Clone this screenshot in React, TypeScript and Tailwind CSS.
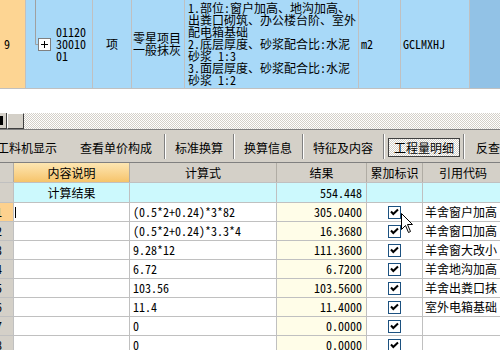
import React from "react";

const descLines = [
  "1.部位:窗户加高、地沟加高、",
  "出粪口砌筑、办公楼台阶、室外",
  "配电箱基础",
  "2.底层厚度、砂浆配合比:水泥",
  "砂浆 1:3",
  "3.面层厚度、砂浆配合比:水泥",
  "砂浆 1:2",
];

const rows = [
  { n: "1", f: "(0.5*2+0.24)*3*82", r: "305.0400", c: "羊舍窗户加高" },
  { n: "2", f: "(0.5*2+0.24)*3.3*4", r: "16.3680", c: "羊舍窗口加高" },
  { n: "3", f: "9.28*12", r: "111.3600", c: "羊舍窗大改小" },
  { n: "4", f: "6.72", r: "6.7200", c: "羊舍地沟加高" },
  { n: "5", f: "103.56", r: "103.5600", c: "羊舍出粪口抹" },
  { n: "6", f: "11.4", r: "11.4000", c: "室外电箱基础" },
  { n: "7", f: "0", r: "0.0000", c: "" },
  { n: "8", f: "0", r: "0.0000", c: "" },
];

const checker =
  "bg-[image:repeating-conic-gradient(#d4d0c8_0_25%,#ffffff_0_50%)] bg-[length:2px_2px]";

function Sep({ className = "" }: { className?: string }) {
  return (
    <div className={`flex h-[25px] shrink-0 ${className}`}>
      <div className="w-px bg-[#808080]" />
      <div className="w-px bg-white" />
    </div>
  );
}

function Check() {
  return (
    <svg width="13" height="13" viewBox="0 0 13 13" className="block">
      <rect x="0.5" y="0.5" width="12" height="12" fill="#ffffff" stroke="#1c5180" />
      <path d="M3 5.5 L5.3 8 L10 3.5" fill="none" stroke="#000000" strokeWidth="2" />
    </svg>
  );
}

export default function App() {
  return (
    <div className="relative w-[500px] h-[350px] overflow-hidden bg-white text-[12px] leading-[12px] text-black font-['Noto_Sans_Mono_CJK_SC','Noto_Sans_CJK_SC',sans-serif]">
      {/* selected bill row */}
      <div className="flex h-[89px] border-b border-[#c0c0c0] bg-[#a8d9f8]">
        <div className="w-[26px] shrink-0 bg-[#fdd593] border-r border-[#c0c0c0] flex items-center pl-[4px]">
          9
        </div>
        <div className="w-[67px] shrink-0 border-r border-[#c0c0c0] flex items-center">
          <svg width="30" height="88" viewBox="0 0 30 88" className="block shrink-0">
            <path d="M9.5 0 V44.5 H12" fill="none" stroke="#a0a0a0" />
            <rect x="12.5" y="38.5" width="12" height="12" fill="#ffffff" stroke="#808080" />
            <path d="M15 44.5 H22 M18.5 41 V48" fill="none" stroke="#000000" />
          </svg>
          <div>
            01120
            <br />
            30010
            <br />
            01
          </div>
        </div>
        <div className="w-[39px] shrink-0 border-r border-[#c0c0c0] flex items-center justify-center">
          项
        </div>
        <div className="w-[53px] shrink-0 border-r border-[#c0c0c0] flex items-center pl-[1px] whitespace-nowrap overflow-hidden">
          <div>
            零星项目
            <br />
            一般抹灰
          </div>
        </div>
        <div className="w-[174px] shrink-0 border-r border-[#c0c0c0] flex flex-col justify-center pl-[3px] whitespace-nowrap overflow-hidden">
          {descLines.map((l, i) => (
            <div key={i}>{l}</div>
          ))}
        </div>
        <div className="w-[42px] shrink-0 border-r border-[#c0c0c0] flex items-center pl-[2px]">
          m2
        </div>
        <div className="w-[69px] shrink-0 border-r border-[#c0c0c0] flex items-center pl-[2px]">
          GCLMXHJ
        </div>
        <div className="flex-1 bg-[#92c2e6]" />
      </div>

      <div className="h-[24px]" />

      {/* horizontal scrollbar */}
      <div className={`flex h-[17px] border-b border-[#808080] ${checker}`}>
        <div className="w-[7px] h-[16px] shrink-0 bg-[#d4d0c8] border-r border-b border-[#404040] flex items-center">
          <div className="w-[3px] h-[9px] bg-black" />
        </div>
        <div className="w-[17px] h-[16px] shrink-0 bg-[#d4d0c8] border border-white border-r-[#404040] border-b-[#404040]" />
      </div>

      {/* tabs */}
      <div className="flex items-center h-[33px] bg-[#d4d0c8] border-b border-[#808080] whitespace-nowrap overflow-hidden">
        <span className="-ml-[3px] shrink-0 pt-[3px]">工料机显示</span>
        <span className="ml-[23px] shrink-0 pt-[3px]">查看单价构成</span>
        <Sep className="ml-[12px]" />
        <span className="ml-[9px] shrink-0 pt-[3px]">标准换算</span>
        <Sep className="ml-[10px]" />
        <span className="ml-[9px] shrink-0 pt-[3px]">换算信息</span>
        <Sep className="ml-[10px]" />
        <span className="ml-[9px] shrink-0 pt-[3px]">特征及内容</span>
        <Sep className="ml-[10px]" />
        <div className={`ml-[3px] mt-[3px] h-[19px] w-[72px] shrink-0 flex items-center justify-center border border-[#404040] ${checker}`}>
          工程量明细
        </div>
        <Sep className="ml-[3px]" />
        <span className="ml-[11px] shrink-0 pt-[3px]">反查</span>
      </div>

      {/* grid header */}
      <div className="flex h-[20px] border-b border-[#c0c0c0] bg-[#d4d0c8]">
        <div className="w-[14px] shrink-0 border-r border-[#b0aca4]" />
        <div className="w-[116px] shrink-0 border-r border-[#b0aca4] bg-linear-to-b from-[#fde6b2] to-[#f6c46a] flex items-center justify-center">
          内容说明
        </div>
        <div className="w-[147px] shrink-0 border-r border-[#b0aca4] flex items-center justify-center">
          计算式
        </div>
        <div className="w-[90px] shrink-0 border-r border-[#b0aca4] flex items-center justify-center">
          结果
        </div>
        <div className="w-[56px] shrink-0 border-r border-[#b0aca4] flex items-center justify-center">
          累加标识
        </div>
        <div className="w-[80px] shrink-0 flex items-center justify-center">引用代码</div>
      </div>

      {/* total row */}
      <div className="flex h-[20px] border-b border-[#c0c0c0] bg-[#ccf9fd]">
        <div className="w-[14px] shrink-0 border-r border-[#c0c0c0] bg-[#d4d0c8]" />
        <div className="w-[116px] shrink-0 border-r border-[#c0c0c0] flex items-center justify-center">
          计算结果
        </div>
        <div className="w-[147px] shrink-0 border-r border-[#c0c0c0]" />
        <div className="w-[90px] shrink-0 border-r border-[#c0c0c0] flex items-center justify-end pr-[4px]">
          554.448
        </div>
        <div className="w-[56px] shrink-0 border-r border-[#c0c0c0]" />
        <div className="flex-1" />
      </div>

      {rows.map((row, i) => (
        <div key={row.n} className="flex h-[19px] border-b border-[#c0c0c0]">
          <div
            className={`w-[14px] shrink-0 border-r border-[#c0c0c0] overflow-hidden flex items-center ${
              i === 0 ? "bg-[#fdd18e]" : "bg-[#d4d0c8]"
            }`}
          >
            <span className="-ml-[4px]">{row.n}</span>
          </div>
          <div className="w-[116px] shrink-0 border-r border-[#c0c0c0] flex items-center pl-[1px]">
            {i === 0 && <div className="w-px h-[11px] bg-black" />}
          </div>
          <div className="w-[147px] shrink-0 border-r border-[#c0c0c0] flex items-center pl-[3px] whitespace-nowrap overflow-hidden">
            {row.f}
          </div>
          <div className="w-[90px] shrink-0 border-r border-[#c0c0c0] bg-[#fffde8] flex items-center justify-end pr-[4px]">
            {row.r}
          </div>
          <div className="w-[56px] shrink-0 border-r border-[#c0c0c0] flex items-center justify-center">
            <Check />
          </div>
          <div className="flex-1 flex items-center pl-[2px] whitespace-nowrap overflow-hidden">
            {row.c}
          </div>
        </div>
      ))}

      {/* mouse pointer */}
      <svg
        width="13"
        height="22"
        viewBox="0 0 13 22"
        className="absolute left-[401px] top-[213px]"
      >
        <path
          d="M0.5 0.5 V16.5 L4.5 12.5 L7.5 19.5 L9.5 18.5 L6.5 11.5 H11.5 Z"
          fill="#ffffff"
          stroke="#000000"
        />
      </svg>
    </div>
  );
}
